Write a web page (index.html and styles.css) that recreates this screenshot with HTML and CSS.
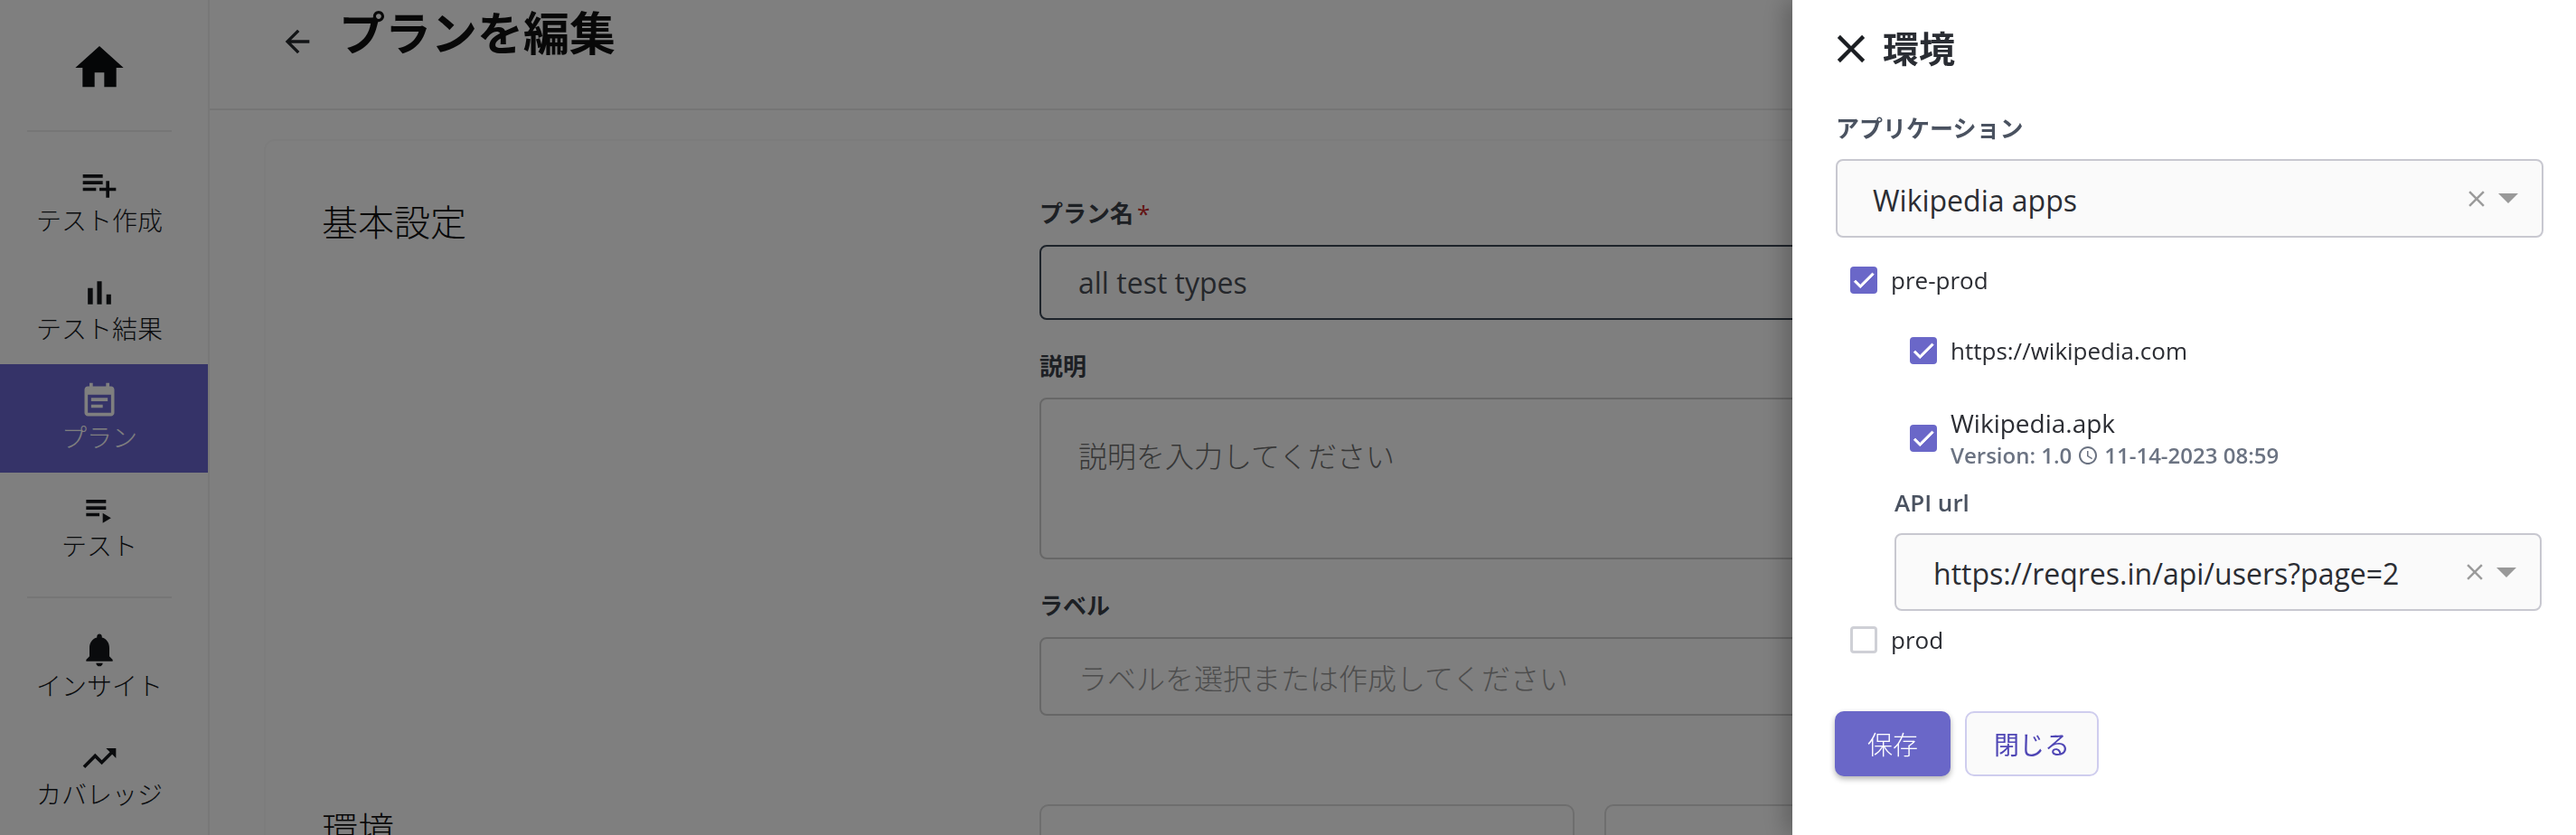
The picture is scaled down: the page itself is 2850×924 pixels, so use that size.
FILE: index.html
```html
<!DOCTYPE html>
<html lang="ja">
<head>
<meta charset="utf-8">
<title>プランを編集</title>
<link rel="stylesheet" href="styles.css">
</head>
<body>
<div class="app">
  <aside class="sidebar">
    <div class="home"><svg class="ico-home" viewBox="0 0 24 24"><path d="M10 20v-6h4v6h5v-8h3L12 3 2 12h3v8z"/></svg></div>
    <div class="divider first"></div>
    <nav class="nav">
      <a class="item"><svg class="ico" viewBox="0 0 24 24"><path d="M14 10H2v2h12v-2zm0-4H2v2h12V6zm4 8v-4h-2v4h-4v2h4v4h2v-4h4v-2h-4zM2 16h8v-2H2v2z"/></svg><span>テスト作成</span></a>
      <a class="item"><svg class="ico" viewBox="0 0 24 24"><path d="M5 9.2h3V19H5zM10.6 5h2.8v14h-2.8zm5.6 8H19v6h-2.8z"/></svg><span>テスト結果</span></a>
      <a class="item active"><svg class="ico" viewBox="0 0 24 24"><path d="M17 10H7v2h10v-2zm2-7h-1V1h-2v2H8V1H6v2H5c-1.11 0-1.99.9-1.99 2L3 19c0 1.1.89 2 2 2h14c1.1 0 2-.9 2-2V5c0-1.1-.9-2-2-2zm0 16H5V8h14v11zm-5-5H7v2h7v-2z"/></svg><span>プラン</span></a>
      <a class="item"><svg class="ico" viewBox="0 0 24 24"><path d="M4 10h12v2H4zm0-4h12v2H4zm0 8h8v2H4zm10 0v6l5-3z"/></svg><span>テスト</span></a>
    </nav>
    <div class="divider second"></div>
    <nav class="nav">
      <a class="item"><svg class="ico" viewBox="0 0 24 24"><path d="M12 22c1.1 0 2-.9 2-2h-4c0 1.1.89 2 2 2zm6-6v-5c0-3.07-1.64-5.64-4.5-6.32V4c0-.83-.67-1.5-1.5-1.5s-1.5.67-1.5 1.5v.68C7.63 5.36 6 7.92 6 11v5l-2 2v1h16v-1l-2-2z"/></svg><span>インサイト</span></a>
      <a class="item"><svg class="ico" viewBox="0 0 24 24"><path d="M16 6l2.29 2.29-4.88 4.88-4-4L2 16.59 3.41 18l6-6 4 4 6.3-6.29L22 12V6z"/></svg><span>カバレッジ</span></a>
    </nav>
  </aside>
  <main class="main">
    <header class="topbar">
      <svg class="ico-back" viewBox="0 0 24 24"><path d="M20 11H7.83l5.59-5.59L12 4l-8 8 8 8 1.41-1.41L7.83 13H20v-2z"/></svg>
      <h1>プランを編集</h1>
    </header>
    <div class="content">
      <section class="card">
        <div class="row">
          <h2>基本設定</h2>
          <div class="fields">
            <label class="flabel">プラン名<span class="req">*</span></label>
            <div class="input focused">all test types</div>
            <label class="flabel">説明</label>
            <div class="input area placeholder">説明を入力してください</div>
            <label class="flabel">ラベル</label>
            <div class="input placeholder light">ラベルを選択または作成してください</div>
          </div>
        </div>
        <div class="row env">
          <h2>環境</h2>
          <div class="boxes"><div class="box"></div><div class="box"></div></div>
        </div>
      </section>
    </div>
  </main>
</div>
<div class="overlay"></div>
<aside class="drawer">
  <div class="dhead">
    <svg class="ico-close" viewBox="0 0 24 24"><path d="M19 6.41 17.59 5 12 10.59 6.41 5 5 6.41 10.59 12 5 17.59 6.41 19 12 13.41 17.59 19 19 17.59 13.41 12z"/></svg>
    <h3>環境</h3>
  </div>
  <label class="dlabel">アプリケーション</label>
  <div class="select app-select">
    <span class="sval">Wikipedia apps</span>
    <svg class="sclear" viewBox="0 0 24 24"><path d="M19 6.41 17.59 5 12 10.59 6.41 5 5 6.41 10.59 12 5 17.59 6.41 19 12 13.41 17.59 19 19 17.59 13.41 12z"/></svg>
    <span class="caret"></span>
  </div>
  <div class="check top">
    <span class="cb on"><svg viewBox="0 0 24 24"><path d="M9 16.17 4.83 12l-1.42 1.41L9 19 21 7l-1.41-1.41z"/></svg></span>
    <span class="ctext">pre-prod</span>
  </div>
  <div class="check sub url">
    <span class="cb on"><svg viewBox="0 0 24 24"><path d="M9 16.17 4.83 12l-1.42 1.41L9 19 21 7l-1.41-1.41z"/></svg></span>
    <span class="ctext">https://wikipedia.com</span>
  </div>
  <div class="check sub apk">
    <span class="cb on"><svg viewBox="0 0 24 24"><path d="M9 16.17 4.83 12l-1.42 1.41L9 19 21 7l-1.41-1.41z"/></svg></span>
    <div class="apkinfo">
      <div class="ctext big">Wikipedia.apk</div>
      <div class="meta">Version: 1.0 <svg class="ico-clock" viewBox="0 0 24 24"><path d="M11.99 2C6.47 2 2 6.48 2 12s4.47 10 9.99 10C17.52 22 22 17.52 22 12S17.52 2 11.99 2zM12 20c-4.42 0-8-3.58-8-8s3.58-8 8-8 8 3.58 8 8-3.58 8-8 8zm.5-13H11v6l5.25 3.15.75-1.23-4.5-2.67z"/></svg> 11-14-2023 08:59</div>
    </div>
  </div>
  <label class="dlabel api">API url</label>
  <div class="select api-select">
    <span class="sval">https://reqres.in/api/users?page=2</span>
    <svg class="sclear" viewBox="0 0 24 24"><path d="M19 6.41 17.59 5 12 10.59 6.41 5 5 6.41 10.59 12 5 17.59 6.41 19 12 13.41 17.59 19 19 17.59 13.41 12z"/></svg>
    <span class="caret"></span>
  </div>
  <div class="check prod">
    <span class="cb"></span>
    <span class="ctext">prod</span>
  </div>
  <div class="actions">
    <button class="btn primary">保存</button>
    <button class="btn secondary">閉じる</button>
  </div>
</aside>
</body>
</html>
```
FILE: styles.css
```css
* { box-sizing: border-box; }
html, body { margin: 0; height: 100%; overflow: hidden; }
body {
  font-family: "Open Sans", "Noto Sans CJK JP", sans-serif;
  color: #1a1d21;
  background: #fff;
}
.app { display: flex; height: 924px; overflow: hidden; }

.sidebar {
  width: 232px;
  flex: none;
  border-right: 2px solid #f0f0f0;
  background: #fff;
}
.home { height: 144px; display: flex; justify-content: center; padding: 43px 10px 0 0; }
.ico-home { width: 64px; height: 64px; fill: #0a0c0f; }
.divider { height: 2px; margin: 0 40px 0 30px; background: #ececec; }
.divider.first { margin-bottom: 17px; }
.divider.second { margin-top: 17px; margin-bottom: 16px; }
.nav { display: flex; flex-direction: column; }
.item {
  height: 120px;
  display: flex;
  flex-direction: column;
  align-items: center;
  padding: 19px 10px 0 0;
  font-size: 28px;
  font-weight: 300;
  line-height: 37px;
  color: #15181c;
}
.ico { width: 44px; height: 44px; fill: #14171a; }
.item.active { background: #6b66d1; color: #fff; }
.item.active .ico { fill: #fff; }

.main { flex: 1; min-width: 0; display: flex; flex-direction: column; }
.topbar {
  height: 122px;
  flex: none;
  border-bottom: 2px solid #ebebeb;
  padding-left: 77px;
  display: flex;
  align-items: flex-start;
  background: #fff;
}
.ico-back { width: 40px; height: 40px; fill: #25282d; margin-top: 26px; flex: none; }
h1 { margin: 0 0 0 26px; font-size: 51px; line-height: 72px; font-weight: 700; color: #111; }
.content { flex: 1; min-height: 0; padding: 32px 0 0 60px; overflow: hidden; }
.card {
  height: 900px;
  padding: 62px 0 0 62px;
  background: #fff;
  border: 2px solid #f8f8f8;
  border-radius: 12px;
  width: 2400px;
}
.row { display: flex; }
h2 { margin: 0; width: 794px; flex: none; font-size: 40px; line-height: 56px; font-weight: 300; color: #111; }
.fields { width: 1200px; display: flex; flex-direction: column; }
.flabel { font-size: 26px; line-height: 36px; font-weight: 600; color: #3a4048; margin-bottom: 17px; }
.req { color: #c62828; margin-left: 4px; font-weight: 400; }
.input {
  height: 84px;
  border: 2px solid #cfcfcf;
  border-radius: 8px;
  padding: 0 41px;
  display: flex;
  align-items: center;
  font-size: 32px;
  margin-bottom: 33px;
  color: #4a4f57;
}
.input.focused { border: 2px solid #3b4654; height: 83px; }
.input.area { height: 179px; align-items: flex-start; padding-top: 38px; font-weight: 300; }
.placeholder { color: #6e6e6e; }
.placeholder.light { color: #9a9a9a; height: 87px; font-weight: 300; }
.env { margin-top: 65px; }
.boxes { display: flex; gap: 33px; }
.box { width: 592px; height: 200px; border: 2px solid #dcdcdc; border-radius: 10px; }

.overlay { position: fixed; inset: 0; background: rgba(0, 0, 0, .5); }
.drawer {
  position: fixed;
  top: 0;
  right: 0;
  bottom: 0;
  width: 867px;
  background: #fff;
  padding: 0 36px 0 48px;
  box-shadow: -8px 0 24px rgba(0, 0, 0, .25);
  display: flex;
  flex-direction: column;
}
.dhead { height: 108px; display: flex; align-items: center; }
.ico-close { width: 52px; height: 52px; fill: #1b1e22; margin-left: -9px; flex: none; }
h3 { margin: 0 0 0 9px; font-size: 40px; line-height: 52px; font-weight: 700; color: #2a2d33; }
.dlabel { font-size: 26px; line-height: 36px; font-weight: 600; color: #4a5260; margin-top: 16px; }
.select {
  position: relative;
  height: 87px;
  margin-top: 16px;
  background: #fafafa;
  border: 2px solid #c8c8d0;
  border-radius: 8px;
  display: flex;
  align-items: center;
  padding-left: 39px;
  font-size: 32px;
  color: #2b2d33;
}
.sval { flex: 1; margin-top: 3px; }
.sclear { width: 30px; height: 30px; fill: #9b9b9b; margin-right: 9px; flex: none; }
.caret {
  width: 0; height: 0;
  border-left: 11px solid transparent;
  border-right: 11px solid transparent;
  border-top: 11px solid #999;
  margin-right: 26px;
  flex: none;
}
.check { display: flex; align-items: center; font-size: 26px; color: #2b2d33; }
.cb {
  width: 30px; height: 30px;
  border-radius: 4px;
  border: 3px solid #cfd0d6;
  background: #fff;
  flex: none;
  display: flex;
  align-items: center;
  justify-content: center;
  margin-right: 15px;
}
.cb.on { background: #6a67c8; border: none; }
.cb svg { width: 30px; height: 30px; fill: #fff; stroke: #fff; stroke-width: .6; }
.ctext { line-height: 38px; }
.ctext.big { font-size: 28px; }
.check.top { margin: 32px 0 0 16px; height: 30px; }
.check.url { margin: 48px 0 0 82px; height: 30px; }
.check.apk { margin: 46px 0 0 82px; height: 71px; }
.apkinfo { display: flex; flex-direction: column; }
.meta { font-size: 24px; line-height: 32px; font-weight: 600; color: #6b7382; display: flex; align-items: center; gap: 6px; margin-top: 1px; }
.ico-clock { width: 24px; height: 24px; fill: #6b7382; }
.dlabel.api { margin: 18px 0 0 65px; }
.api-select { height: 86px; margin-left: 65px; padding-left: 41px; margin-right: 2px; }
.check.prod { margin: 17px 0 0 16px; height: 30px; }
.actions { display: flex; gap: 16px; margin: 64px 0 0 -1px; }
.btn { height: 72px; border-radius: 10px; font-family: inherit; font-size: 28px; padding: 0; }
.btn.primary { width: 128px; background: #6a67c8; color: #fff; border: none; font-weight: 300; box-shadow: 0 3px 6px rgba(0, 0, 0, .3); }
.btn.secondary { width: 148px; background: #fafafa; color: #4f46b5; border: 2px solid #cfcdee; font-weight: 400; }
```
